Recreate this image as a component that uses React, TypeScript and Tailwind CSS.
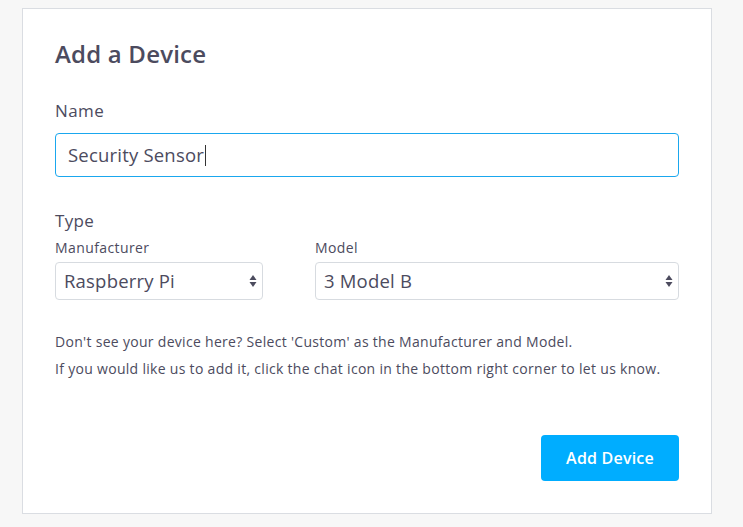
export default function App() {
  const font = { fontFamily: "'Open Sans', 'Noto Sans', sans-serif" };

  const Arrows = () => (
    <svg width="8" height="14" viewBox="0 0 8 14" className="shrink-0">
      <path d="M4 1 L7.5 6 L0.5 6 Z" fill="#4c4b5e" />
      <path d="M4 13 L7.5 8 L0.5 8 Z" fill="#4c4b5e" />
    </svg>
  );

  return (
    <div className="w-[743px] h-[527px] bg-[#f7f7f7] pt-2 pl-[22px]" style={font}>
      <div className="w-[690px] h-[506px] border border-[#dadde2] bg-white px-8 pt-[30px] text-[#4c4b5e]">
        <h1 className="text-[24px] leading-[30px] font-semibold tracking-[0.2px]">Add a Device</h1>

        <label className="block mt-[31px] text-[17px] leading-[22px] tracking-[0.4px]">Name</label>
        <div className="mt-[11px] h-[44px] border border-[#1aa7ee] rounded-[4px] flex items-center pl-3">
          <span className="text-[18.5px] tracking-[0.2px]">Security Sensor</span>
          <span className="w-px h-[21px] bg-[#333] ml-px" />
        </div>

        <div className="mt-[33px] text-[17px] leading-[22px] tracking-[0.3px]">Type</div>
        <div className="flex gap-[52px] mt-[7px]">
          <div className="w-[208px]">
            <div className="text-[14px] leading-[18px] tracking-[0.4px]">Manufacturer</div>
            <div className="mt-[5px] h-[38px] border border-[#d7dbe0] rounded-[4px] flex items-center justify-between pl-2 pr-[5px]">
              <span className="text-[18.5px] tracking-[0.2px]">Raspberry Pi</span>
              <Arrows />
            </div>
          </div>
          <div className="w-[364px]">
            <div className="text-[14px] leading-[18px] tracking-[0.4px]">Model</div>
            <div className="mt-[5px] h-[38px] border border-[#d7dbe0] rounded-[4px] flex items-center justify-between pl-2 pr-[5px]">
              <span className="text-[18.5px] tracking-[0.2px]">3 Model B</span>
              <Arrows />
            </div>
          </div>
        </div>

        <div className="mt-[28px] text-[14px] leading-[27px] tracking-[0.3px]">
          <p>Don't see your device here? Select 'Custom' as the Manufacturer and Model.</p>
          <p>If you would like us to add it, click the chat icon in the bottom right corner to let us know.</p>
        </div>

        <div className="flex justify-end mt-[53px]">
          <button className="w-[138px] h-[46px] rounded-[4px] bg-[#00adff] text-white text-[16px] font-semibold tracking-[0.2px]">
            Add Device
          </button>
        </div>
      </div>
    </div>
  );
}
